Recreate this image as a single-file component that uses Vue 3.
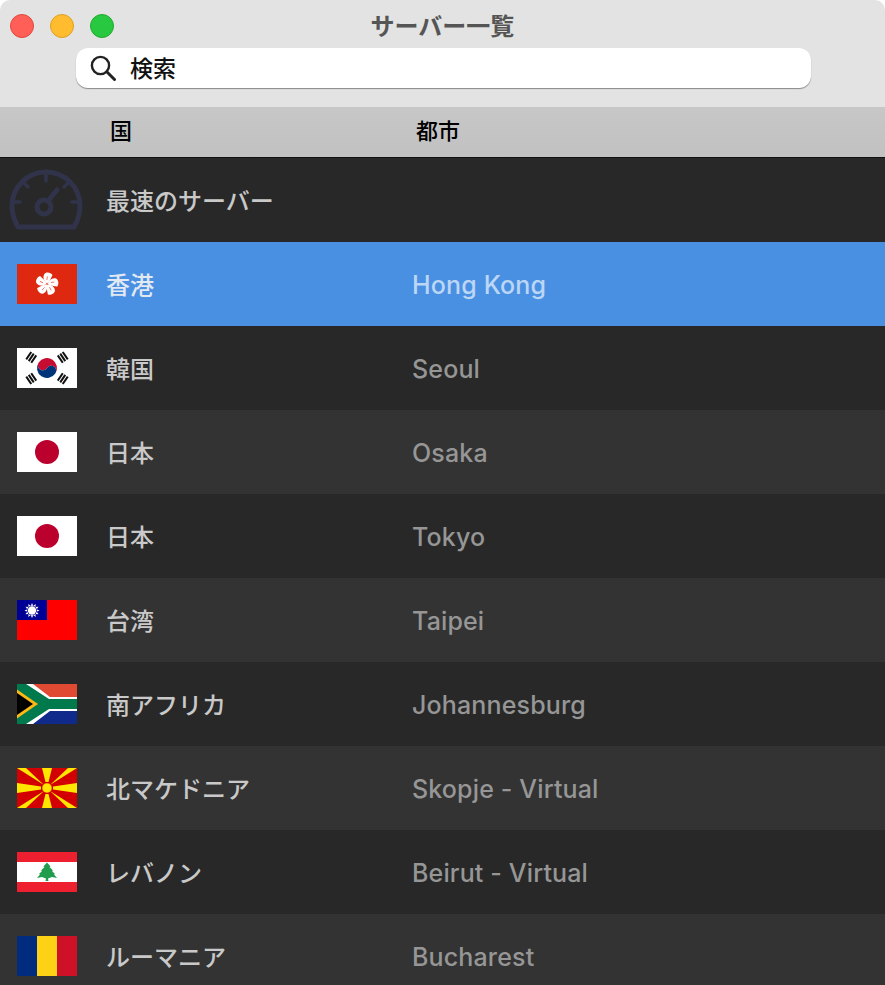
<script setup>
// サーバー一覧: row data only, flags are drawn inline in the template
const servers = [
  { id: 'hk', name: '香港', city: 'Hong Kong', selected: true },
  { id: 'kr', name: '韓国', city: 'Seoul' },
  { id: 'jp1', flag: 'jp', name: '日本', city: 'Osaka' },
  { id: 'jp2', flag: 'jp', name: '日本', city: 'Tokyo' },
  { id: 'tw', name: '台湾', city: 'Taipei' },
  { id: 'za', name: '南アフリカ', city: 'Johannesburg' },
  { id: 'mk', name: '北マケドニア', city: 'Skopje - Virtual' },
  { id: 'lb', name: 'レバノン', city: 'Beirut - Virtual' },
  { id: 'ro', name: 'ルーマニア', city: 'Bucharest' }
]

const flagOf = (s) => s.flag || s.id
const petals = [12, 84, 156, 228, 300]
const sunRays = [0, 30, 60, 90, 120, 150, 180, 210, 240, 270, 300, 330]
const trigrams = [-56, 56, -124, 124]
</script>

<template>
  <div class="window">
    <header class="titlebar">
      <div class="title-row">
        <div class="lights">
          <span class="light red"></span>
          <span class="light yellow"></span>
          <span class="light green"></span>
        </div>
        <h1 class="title">サーバー一覧</h1>
      </div>
      <div class="search">
        <svg class="search-icon" viewBox="0 0 26 26" width="26" height="26">
          <circle cx="10.5" cy="10.5" r="8.6" fill="none" stroke="#222" stroke-width="2.4" />
          <path d="M16.8 16.8L24.500 24.500" fill="none" stroke="#222" stroke-width="3" stroke-linecap="round" />
        </svg>
        <span class="search-text">検索</span>
      </div>
    </header>

    <div class="columns">
      <span class="col-country">国</span>
      <span class="col-city">都市</span>
    </div>

    <div class="list">
      <div class="row">
        <svg class="gauge" viewBox="0 0 74 62" width="74" height="62">
          <path d="M9 58C5 51 3 44 3 37A34 34 0 0 1 71 37C71 44 69 51 65 58Z" fill="none" stroke="#30334a" stroke-width="5" stroke-linejoin="round" />
          <path d="M37 6v6M15 14l4 4M59 14l-4 4M5 33h6M69 33h-6" stroke="#30334a" stroke-width="3.500" stroke-linecap="round" />
          <circle cx="35" cy="38" r="7" fill="none" stroke="#30334a" stroke-width="5" />
          <path d="M39 32l9-11" stroke="#30334a" stroke-width="5" stroke-linecap="round" />
        </svg>
        <span class="name fastest">最速のサーバー</span>
      </div>

      <div v-for="s in servers" :key="s.id" class="row" :class="{ selected: s.selected }">
        <svg class="flag" viewBox="0 0 60 40" width="60" height="40">
          <template v-if="flagOf(s) === 'hk'">
            <rect width="60" height="40" fill="#de2910" />
            <g transform="translate(30 20)">
              <g v-for="a in petals" :key="a" :transform="`rotate(${a})`">
                <path d="M0 -0.500C-4 -2.500 -6 -6 -4.500 -9.500C-3 -12 1.500 -12 3.500 -10C2.500 -7 2.500 -3 0 -0.500Z" fill="#fff" />
                <path d="M-1 -4L-1.200 -7.500" stroke="#de2910" stroke-width="0.600" />
              </g>
            </g>
          </template>

          <template v-else-if="flagOf(s) === 'kr'">
            <rect width="60" height="40" fill="#fff" />
            <g transform="rotate(33.69 30 20)">
              <path d="M20 20A10 10 0 0 1 40 20A5 5 0 0 0 30 20A5 5 0 0 1 20 20Z" fill="#c60c30" />
              <path d="M20 20A10 10 0 0 0 40 20A5 5 0 0 0 30 20A5 5 0 0 1 20 20Z" fill="#003478" />
            </g>
            <g v-for="a in trigrams" :key="a" :transform="`translate(30 20) rotate(${a})`" fill="#111">
              <rect x="-4.500" y="-23" width="9" height="2" />
              <rect x="-4.500" y="-20" width="9" height="2" />
              <rect x="-4.500" y="-17" width="9" height="2" />
            </g>
          </template>

          <template v-else-if="flagOf(s) === 'jp'">
            <rect width="60" height="40" fill="#fff" />
            <circle cx="30" cy="20" r="12" fill="#bc002d" />
          </template>

          <template v-else-if="flagOf(s) === 'tw'">
            <rect width="60" height="40" fill="#fe0000" />
            <rect width="30" height="20" fill="#000095" />
            <g transform="translate(15 10.500)">
              <path v-for="a in sunRays" :key="a" :transform="`rotate(${a})`" d="M-1.300 -4.500L0 -7.500L1.300 -4.500Z" fill="#fff" />
              <circle r="4.800" fill="#000095" />
              <circle r="4.200" fill="#fff" />
            </g>
          </template>

          <template v-else-if="flagOf(s) === 'za'">
            <rect width="60" height="20" fill="#e04a32" />
            <rect y="20" width="60" height="20" fill="#0f2a8a" />
            <path d="M9 0H16L33 13H60V27H33L16 40H9L0 40V0Z" fill="#fff" />
            <path d="M0 0H9L32 15H60V25H32L9 40H0Z" fill="#007a4d" />
            <path d="M0 5.500L21 20L0 34.500Z" fill="#fdb913" />
            <path d="M0 9L16 20L0 31Z" fill="#000" />
          </template>

          <template v-else-if="flagOf(s) === 'mk'">
            <rect width="60" height="40" fill="#d20000" />
            <g transform="translate(30 20)" fill="#ffe600">
              <path d="M-5 -20H5L1.500 -6H-1.500Z" />
              <path d="M-5 20H5L1.500 6H-1.500Z" />
              <path d="M-30 -5V5L-6 1.500V-1.500Z" />
              <path d="M30 -5V5L6 1.500V-1.500Z" />
              <path d="M-30 -20H-21L-3 -3Z" />
              <path d="M30 -20H21L3 -3Z" />
              <path d="M-30 20H-21L-3 3Z" />
              <path d="M30 20H21L3 3Z" />
              <circle r="5" stroke="#d20000" stroke-width="0.500" />
            </g>
          </template>

          <template v-else-if="flagOf(s) === 'lb'">
            <rect width="60" height="40" fill="#ee2030" />
            <rect y="10" width="60" height="20" fill="#fff" />
            <path d="M30 10.500L33.500 14.500L32.500 15L36 18.500L35 19L38 22L37 22.500L40 26L35 25L31 26.500L31.500 29L28.500 29L29 26.500L25 25L20 26L23 22.500L22 22L25 19L24 18.500L27.500 15L26.500 14.500Z" fill="#1f9d4d" />
          </template>

          <template v-else-if="flagOf(s) === 'ro'">
            <rect width="20" height="40" fill="#002b7f" />
            <rect x="20" width="20" height="40" fill="#fcd116" />
            <rect x="40" width="20" height="40" fill="#ce1126" />
          </template>
        </svg>
        <span class="name">{{ s.name }}</span>
        <span class="city">{{ s.city }}</span>
      </div>
    </div>
  </div>
</template>

<style>
html, body {
  margin: 0;
  background: #fff;
}
</style>

<style scoped>
.window {
  height: 985px;
  overflow: hidden;
  border-radius: 10px 10px 0 0;
  background: #e3e3e3;
  font-family: "Inter", "Noto Sans CJK JP", sans-serif;
}

.titlebar {
  height: 107px;
  box-sizing: border-box;
  padding-top: 9px;
}

.title-row {
  display: grid;
  grid-template-columns: 1fr auto 1fr;
  align-items: center;
  height: 32px;
}

.lights {
  display: flex;
  gap: 16px;
  padding-left: 10px;
  padding-top: 2px;
}

.light {
  width: 24px;
  height: 24px;
  box-sizing: border-box;
  border-radius: 50%;
  border: 1px solid;
}

.red { background: #ff5f57; border-color: #e2463f; }
.yellow { background: #febc2e; border-color: #dfa023; }
.green { background: #28c840; border-color: #1dad2b; }

.title {
  margin: 0;
  font-family: "Noto Sans CJK JP", sans-serif;
  font-size: 24px;
  font-weight: 700;
  line-height: 32px;
  color: #555;
}

.search {
  display: flex;
  align-items: center;
  height: 40px;
  box-sizing: border-box;
  margin: 7px 74px 0 76px;
  padding-left: 14px;
  background: #fff;
  border-radius: 12px;
  box-shadow: 0 1px 1px rgba(0, 0, 0, 0.4);
}

.search-text {
  margin-left: 14px;
  margin-bottom: 2px;
  font-family: "Noto Sans CJK JP", sans-serif;
  font-size: 23px;
  font-weight: 500;
  color: #111;
}

.columns {
  display: flex;
  align-items: center;
  height: 51px;
  box-sizing: border-box;
  padding-bottom: 6px;
  background: linear-gradient(#c7c7c7, #c1c1c1);
  border-bottom: 1px solid #111;
  font-family: "Noto Sans CJK JP", sans-serif;
  font-size: 22px;
  font-weight: 500;
  color: #000;
}

.col-country {
  width: 306px;
  margin-left: 110px;
}

.row {
  display: flex;
  align-items: center;
  height: 84px;
  padding-left: 17px;
  background: #282828;
}

.row:nth-child(even) {
  background: #333;
}

.row:first-child {
  background: #282828;
  padding-left: 9px;
}

.row.selected {
  background: #4a90e2;
}

.row.selected .name {
  color: #e2e9f3;
}

.row.selected .city {
  color: #bcd6f5;
}

.gauge {
  margin-right: 23px;
  flex: none;
}

.flag {
  flex: none;
  margin-right: 29px;
}

.name {
  width: 306px;
  flex: none;
  margin-bottom: 2px;
  font-family: "Noto Sans CJK JP", sans-serif;
  font-size: 24px;
  font-weight: 500;
  color: #c9c9c9;
}

.name.fastest {
  width: auto;
}

.city {
  margin-top: 2px;
  font-size: 25px;
  font-weight: 500;
  letter-spacing: 0.15px;
  color: #969696;
}
</style>
